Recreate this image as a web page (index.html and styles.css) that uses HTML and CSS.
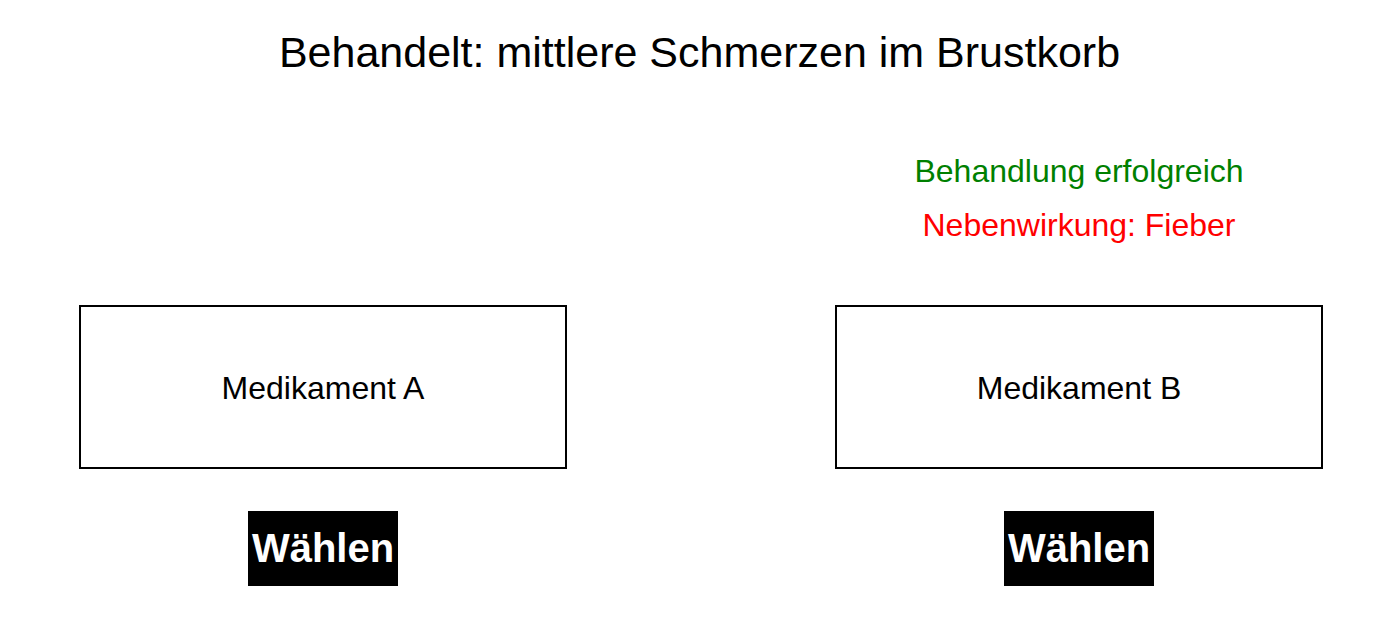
FILE: index.html
```html
<!DOCTYPE html>
<html lang="de">
<head>
    <meta charset="UTF-8">
    <meta name="viewport" content="width=device-width, initial-scale=1.0">
    <title>Medikament wählen</title>
    <link rel="stylesheet" href="styles.css">
</head>
<body>
    <h1 class="heading">Behandelt: mittlere Schmerzen im Brustkorb</h1>

    <div class="choices">
        <!-- Medikament A -->
        <div class="feedback"></div>
        <!-- Medikament B -->
        <div class="feedback">
            <p class="success">Behandlung erfolgreich</p>
            <p class="side-effect">Nebenwirkung: Fieber</p>
        </div>

        <div class="option">Medikament A</div>
        <div class="option">Medikament B</div>

        <button class="btn">Wählen</button>
        <button class="btn">Wählen</button>
    </div>
</body>
</html>
```

FILE: styles.css
```css
body {
    font-family: Arial, 'Liberation Sans', sans-serif;
    margin: 0;
    padding: 0;
    background-color: #fff;
    color: #000;
}

.heading {
    margin: 28px 0 0;
    font-size: 43px;
    font-weight: normal;
    text-align: center;
}

.choices {
    display: grid;
    grid-template-columns: 488px 488px;
    column-gap: 268px;
    padding-left: 79px;
    margin-top: 67px;
}

.feedback {
    height: 108px;
    text-align: center;
}

.feedback p {
    margin: 0;
    font-size: 32px;
    line-height: 54px;
}

.success {
    color: #008000;
}

.side-effect {
    color: #ff0000;
}

.option {
    box-sizing: border-box;
    height: 164px;
    margin-top: 53px;
    padding-top: 2px;
    border: 2px solid #000;
    display: flex;
    justify-content: center;
    align-items: center;
    font-size: 32px;
}

.btn {
    justify-self: center;
    width: 150px;
    height: 75px;
    margin-top: 42px;
    padding: 0;
    border: none;
    background: #000;
    color: #fff;
    font-family: Arial, 'Liberation Sans', sans-serif;
    font-size: 40px;
    font-weight: bold;
    cursor: pointer;
}
```
